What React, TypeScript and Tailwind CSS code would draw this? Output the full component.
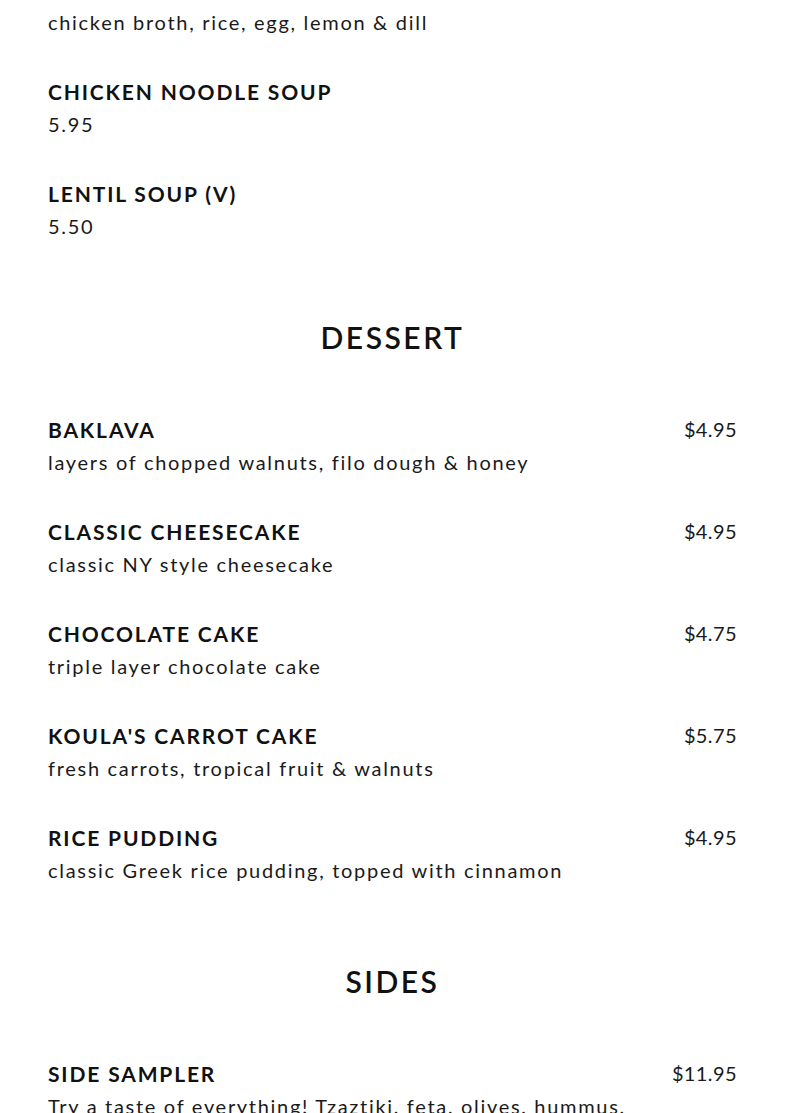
type Item = { name: string; desc: string; price?: string };

const soups: Item[] = [
  { name: 'AVGOLEMONO SOUP', desc: 'chicken broth, rice, egg, lemon & dill', price: '$5.95' },
  { name: 'CHICKEN NOODLE SOUP', desc: '5.95' },
  { name: 'LENTIL SOUP (V)', desc: '5.50' },
];

const desserts: Item[] = [
  { name: 'BAKLAVA', desc: 'layers of chopped walnuts, filo dough & honey', price: '$4.95' },
  { name: 'CLASSIC CHEESECAKE', desc: 'classic NY style cheesecake', price: '$4.95' },
  { name: 'CHOCOLATE CAKE', desc: 'triple layer chocolate cake', price: '$4.75' },
  { name: "KOULA'S CARROT CAKE", desc: 'fresh carrots, tropical fruit & walnuts', price: '$5.75' },
  { name: 'RICE PUDDING', desc: 'classic Greek rice pudding, topped with cinnamon', price: '$4.95' },
];

const sides: Item[] = [
  { name: 'SIDE SAMPLER', desc: 'Try a taste of everything! Tzaztiki, feta, olives, hummus,', price: '$11.95' },
];

function MenuItem({ item }: { item: Item }) {
  return (
    <div className="mb-[36px]">
      <div className="flex justify-between items-center h-[33px]">
        <span className="font-bold text-[21px] tracking-[1.85px] text-[#111]">{item.name}</span>
        {item.price && (
          <span className="text-[20px] tracking-[0.4px] text-[#1a1a1a] -translate-y-[1px]">{item.price}</span>
        )}
      </div>
      <div className="h-[33px] leading-[33px] text-[20px] tracking-[1.7px] text-[#1a1a1a]">{item.desc}</div>
    </div>
  );
}

function Section({ title, items }: { title: string; items: Item[] }) {
  return (
    <div className="pt-[38px]">
      <h2 className="mb-[56px] h-[40px] leading-[40px] text-center text-[30px] font-semibold tracking-[2.5px] text-[#111]">
        {title}
      </h2>
      {items.map((it) => (
        <MenuItem key={it.name} item={it} />
      ))}
    </div>
  );
}

export default function App() {
  return (
    <div
      className="min-h-screen bg-white overflow-hidden h-[1113px]"
      style={{ fontFamily: 'Lato, "Open Sans", sans-serif' }}
    >
      <div className="px-12 -mt-[27px]">
        {soups.map((it) => (
          <MenuItem key={it.name} item={it} />
        ))}
        <Section title="DESSERT" items={desserts} />
        <Section title="SIDES" items={sides} />
      </div>
    </div>
  );
}
